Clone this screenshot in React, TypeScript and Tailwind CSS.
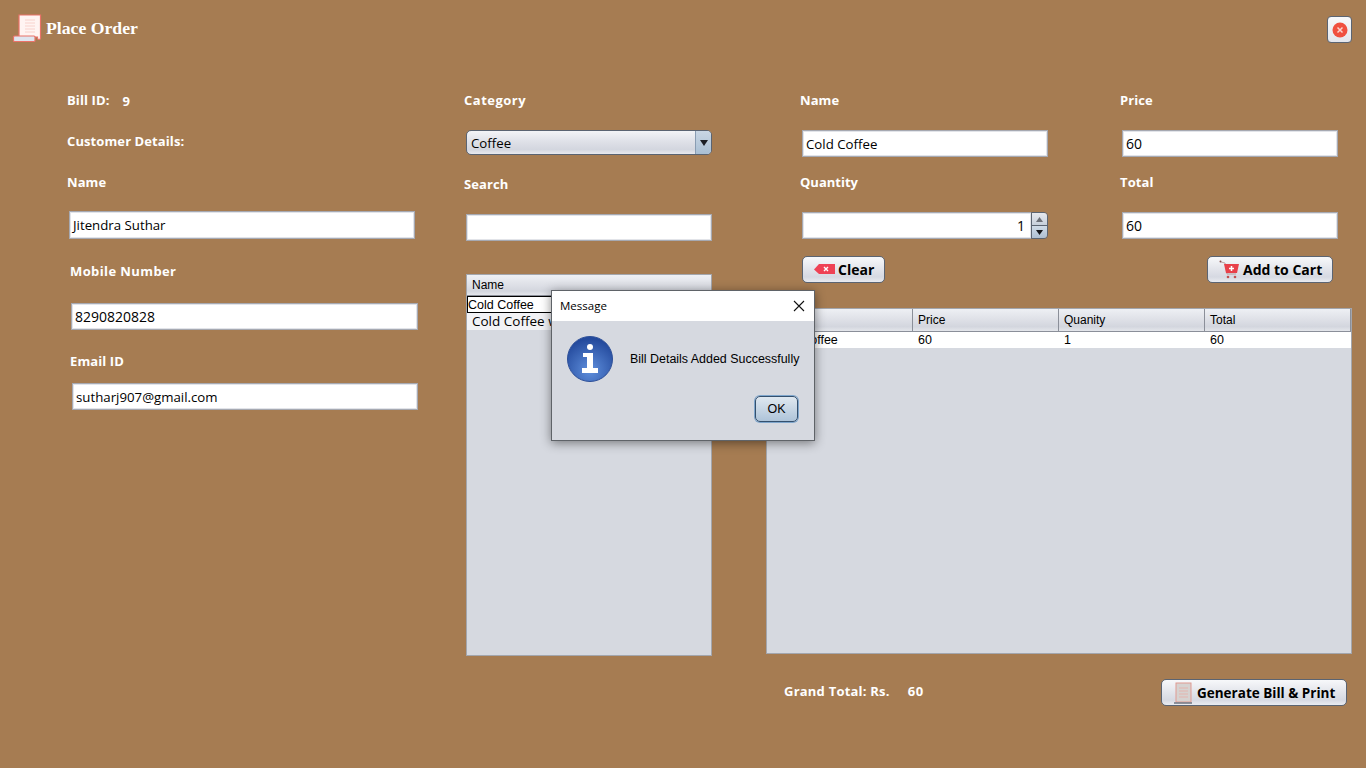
const Label = ({ text, className = 'tracking-[0.1px]' }: { text: string; className?: string }) => (
  <p className={`h-5 text-[13px] leading-5 font-bold text-white font-['Open_Sans',sans-serif] whitespace-nowrap ${className}`}>{text}</p>
)

const Field = ({ value, className = '' }: { value: string; className?: string }) => (
  <div className={`bg-white border border-[#a6a9b2] shadow-[inset_0_0_0_1px_#e2e4e9] px-[3px] flex items-center text-black font-['Open_Sans',sans-serif] ${/^\d+$/.test(value) ? 'text-[14px]' : 'text-[13.25px] pt-[2px]'} ${className}`}>
    {value}
  </div>
)

const btn = "flex items-center rounded-[5px] border border-[#5b6472] bg-[linear-gradient(#f7f8fa,#e4e6ec_45%,#d6d9e2_80%,#e9ebf0)] font-bold text-black font-['Open_Sans',sans-serif] whitespace-nowrap"
const headerCell = "bg-[linear-gradient(#eef0f4,#dcdee5_55%,#d3d6de_80%,#e4e6eb)] text-[12px] text-black font-['Liberation_Sans',sans-serif]"

const ReceiptIcon = () => (
  <svg width="30" height="30" viewBox="0 0 30 30">
    <path d="M7 2h21.500v23a1.500 1.500 0 0 1-3 0v-1H7z" fill="#fff4f2" stroke="#ea7268" strokeWidth="1.200" />
    <path d="M13 7h10M13 10h10M13 13h10M13 16h10M13 19h10" stroke="#f8d2cc" strokeWidth="1" />
    <rect x="1.500" y="23" width="21.500" height="5.500" rx="1" fill="#dfe5ef" stroke="#ea7268" strokeWidth="1.200" />
  </svg>
)

const InfoIcon = () => (
  <svg width="48" height="48" viewBox="0 0 48 48">
    <defs>
      <radialGradient id="info" cx="50%" cy="75%" r="70%">
        <stop offset="0%" stopColor="#5f8fdc" />
        <stop offset="100%" stopColor="#23499c" />
      </radialGradient>
    </defs>
    <circle cx="24" cy="24" r="22.500" fill="url(#info)" stroke="#2d4f98" />
    <circle cx="24" cy="12" r="3" fill="#fff" />
    <path d="M17 18h10v15h5v5H16v-5h5V22h-4z" fill="#fff" />
  </svg>
)

const App = () => {
  return (
    <div className="relative w-[1366px] h-[768px] overflow-hidden bg-[#a67c52]">
      {/* title bar */}
      <div className="h-[90px] flex items-start justify-between pl-[12px] pr-[14px]">
        <div className="flex items-center mt-[13px] gap-[4px]">
          <ReceiptIcon />
          <span className="text-[17.7px] font-bold text-white font-['Liberation_Serif',serif]">Place Order</span>
        </div>
        <div className="mt-[16px] w-[25px] h-[27px] rounded-[4px] border border-[#5b6472] bg-[linear-gradient(#f7f8fa,#e4e6ec)] flex items-center justify-center">
          <svg width="16" height="16" viewBox="0 0 16 16">
            <circle cx="8" cy="8" r="7.500" fill="#f0503f" />
            <path d="M5.500 5.500l5 5M10.500 5.500l-5 5" stroke="#fbd5cf" strokeWidth="1.500" />
          </svg>
        </div>
      </div>

      <div className="flex">
        {/* customer */}
        <div className="w-[397px] ml-[67px] flex flex-col items-start">
          <div className="flex">
            <Label text="Bill ID:" />
            <Label text="9" className="ml-[13px] pt-[1px] tracking-[0.1px]" />
          </div>
          <Label text="Customer Details:" className="mt-[21px] tracking-[0.1px]" />
          <Label text="Name" className="mt-[21px] tracking-[0.1px]" />
          <Field value="Jitendra Suthar" className="mt-[19px] ml-[2px] w-[346px] h-[28px]" />
          <Label text="Mobile Number" className="mt-[22px] ml-[3px] tracking-[0.4px]" />
          <Field value="8290820828" className="mt-[22px] ml-[4px] w-[347px] h-[27px]" />
          <Label text="Email ID" className="mt-[21px] ml-[3px] tracking-[0.1px]" />
          <Field value="sutharj907@gmail.com" className="mt-[12px] ml-[5px] w-[346px] h-[27px]" />
        </div>

        {/* category and products */}
        <div className="w-[302px] flex flex-col items-start">
          <Label text="Category" className="tracking-[0.5px]" />
          <div className="mt-[20px] ml-[2px] w-[246px] h-[25px] flex rounded-[5px] border border-[#5b6472] overflow-hidden bg-[linear-gradient(#f3f4f7,#dfe1e8_45%,#d3d6df_80%,#e8e9ee)]">
            <span className="flex-1 pl-[4px] text-[13.25px] leading-[24px] text-black font-['Open_Sans',sans-serif]">Coffee</span>
            <span className="w-[16px] flex items-center justify-center border-l border-[#8a9db3] bg-[linear-gradient(#c9d6e4,#a9bfd4)]">
              <svg width="8" height="8" viewBox="0 0 8 8"><path d="M0 1h8L4 7z" fill="#1c1f26" /></svg>
            </span>
          </div>
          <Label text="Search" className="mt-[19px] tracking-[0.1px]" />
          <Field value="" className="mt-[20px] ml-[2px] w-[246px] h-[27px]" />
          <div className="mt-[33px] ml-[2px] w-[246px] h-[382px] bg-[#d6d9e0] border border-[#a3a6ad]">
            <div className={`h-[21px] pl-[5px] leading-[21px] border-b border-[#8b8f99] ${headerCell}`}>Name</div>
            <div className="h-[17px] bg-white border border-black text-[12.5px] leading-[16px] text-black font-['Liberation_Sans',sans-serif]">Cold Coffee</div>
            <div className="h-[17px] bg-[#f2f2f5] pl-[5px] text-[13.5px] leading-[17px] text-black whitespace-nowrap font-['Open_Sans',sans-serif]">Cold Coffee with Cream</div>
          </div>
        </div>

        {/* order */}
        <div className="w-[586px] flex flex-col items-start">
          <div className="flex pl-[34px]">
            <div className="w-[320px] flex flex-col items-start">
              <Label text="Name" />
              <Field value="Cold Coffee" className="mt-[20px] ml-[2px] w-[246px] h-[27px]" />
              <Label text="Quantity" className="mt-[15px]" />
              <div className="mt-[20px] ml-[2px] w-[246px] h-[27px] flex">
                <div className="flex-1 bg-white border border-[#a6a9b2] border-r-0 shadow-[inset_0_0_0_1px_#e2e4e9] pr-[6px] flex items-center justify-end text-[14px] text-black font-['Open_Sans',sans-serif]">1</div>
                <div className="w-[17px] flex flex-col rounded-r-[4px] overflow-hidden border border-[#5b6472]">
                  <span className="flex-1 flex items-center justify-center bg-[linear-gradient(#e6e8ee,#c6cfdb)] border-b border-[#5b6472]">
                    <svg width="7" height="5" viewBox="0 0 7 5"><path d="M0 5h7L3.500 0z" fill="#6c7079" /></svg>
                  </span>
                  <span className="flex-1 flex items-center justify-center bg-[linear-gradient(#cfdbe8,#aebfd2)]">
                    <svg width="7" height="5" viewBox="0 0 7 5"><path d="M0 0h7L3.500 5z" fill="#15171c" /></svg>
                  </span>
                </div>
              </div>
              <button className={`${btn} text-[14px] mt-[17px] ml-[2px] w-[83px] h-[27px] pl-[11px] gap-[3px]`}>
                <svg width="21" height="11" viewBox="0 0 21 11">
                  <path d="M0 5.500L5 0h16v10H5z" fill="#ef4255" />
                  <path d="M10 3l4 4M14 3l-4 4" stroke="#fff" strokeWidth="1.400" />
                </svg>
                Clear
              </button>
            </div>
            <div className="w-[232px] flex flex-col items-start">
              <Label text="Price" />
              <Field value="60" className="mt-[20px] ml-[2px] w-[216px] h-[27px]" />
              <Label text="Total" className="mt-[15px] tracking-[0.1px]" />
              <Field value="60" className="mt-[20px] ml-[2px] w-[216px] h-[27px]" />
              <button className={`${btn} text-[14px] mt-[17px] ml-[87px] w-[126px] h-[27px] pl-[11px] gap-[3px]`}>
                <svg width="21" height="20" viewBox="0 0 21 20">
                  <circle cx="1.500" cy="1.500" r="1" fill="#8a4a4a" />
                  <path d="M2 2l4 1 2 11h9" fill="none" stroke="#b09090" strokeWidth="0.800" />
                  <path d="M5 4h15l-2 9H7z" fill="#e8404a" />
                  <path d="M12.500 6v5M10 8.500h5" stroke="#fff" strokeWidth="1.500" />
                  <circle cx="9" cy="17" r="1.300" fill="#c25050" />
                  <circle cx="16" cy="17" r="1.300" fill="#c25050" />
                </svg>
                Add to Cart
              </button>
            </div>
          </div>

          {/* cart table */}
          <div className="mt-[25px] w-[586px] h-[346px] bg-[#d6d9e0] border border-[#a3a6ad]">
            <div className="grid grid-cols-[146px_146px_146px_146px] h-[23px] border-b border-[#8b8f99]">
              {['Name', 'Price', 'Quanity', 'Total'].map((h) => (
                <div key={h} className={`pl-[5px] leading-[22px] border-r border-[#8b8f99] ${headerCell}`}>{h}</div>
              ))}
            </div>
            <div className="grid grid-cols-[146px_146px_146px_146px] h-[16px] bg-white text-[12.5px] leading-[16px] text-black font-['Liberation_Sans',sans-serif]">
              {['Cold Coffee', '60', '1', '60'].map((c, i) => (
                <div key={i} className="pl-[5px]">{c}</div>
              ))}
            </div>
          </div>

          <div className="mt-[25px] w-full flex items-start pl-[18px]">
            <Label text="Grand Total: Rs." className="mt-[2px] tracking-[0.22px]" />
            <Label text="60" className="mt-[2px] ml-[18px] tracking-[0.5px]" />
            <button className={`${btn} text-[13.5px] ml-auto mr-[5px] w-[186px] h-[27px] pl-[11px] gap-[4px]`}>
              <svg width="20" height="22" viewBox="0 0 20 22">
                <rect x="3" y="1" width="15" height="19" fill="#d6d2d0" stroke="#e09a92" />
                <path d="M6 6h9M6 9h9M6 12h9M6 15h9" stroke="#e4b4ae" />
                <path d="M1 21h18" stroke="#6f7480" strokeWidth="1.500" />
              </svg>
              <span className="pt-[1px]">Generate Bill &amp; Print</span>
            </button>
          </div>
        </div>
      </div>

      {/* message dialog */}
      <div className="absolute left-[551px] top-[290px] w-[264px] h-[151px] flex flex-col bg-[#d6d9e0] border border-[#5f6368] shadow-[0_2px_10px_rgba(0,0,0,0.45)]">
        <div className="h-[30px] shrink-0 bg-white flex items-center justify-between pl-[8px] pr-[9px]">
          <span className="text-[11.5px] text-black font-['Open_Sans',sans-serif]">Message</span>
          <svg width="12" height="12" viewBox="0 0 12 12"><path d="M1 1l10 10M11 1L1 11" stroke="#111" strokeWidth="1.100" /></svg>
        </div>
        <div className="flex items-center mt-[14px] pl-[14px]">
          <InfoIcon />
          <span className="ml-[16px] text-[12.45px] text-black whitespace-nowrap font-['Liberation_Sans',sans-serif]">Bill Details Added Successfully</span>
        </div>
        <button className="mt-[13px] ml-auto mr-[16px] w-[43px] h-[26px] rounded-[5px] border border-[#34506e] shadow-[0_0_0_1px_#7fa6cc] bg-[linear-gradient(#dfe8f0,#aec4d9)] text-[12.5px] text-black font-['Liberation_Sans',sans-serif]">OK</button>
      </div>
    </div>
  )
}

export default App
